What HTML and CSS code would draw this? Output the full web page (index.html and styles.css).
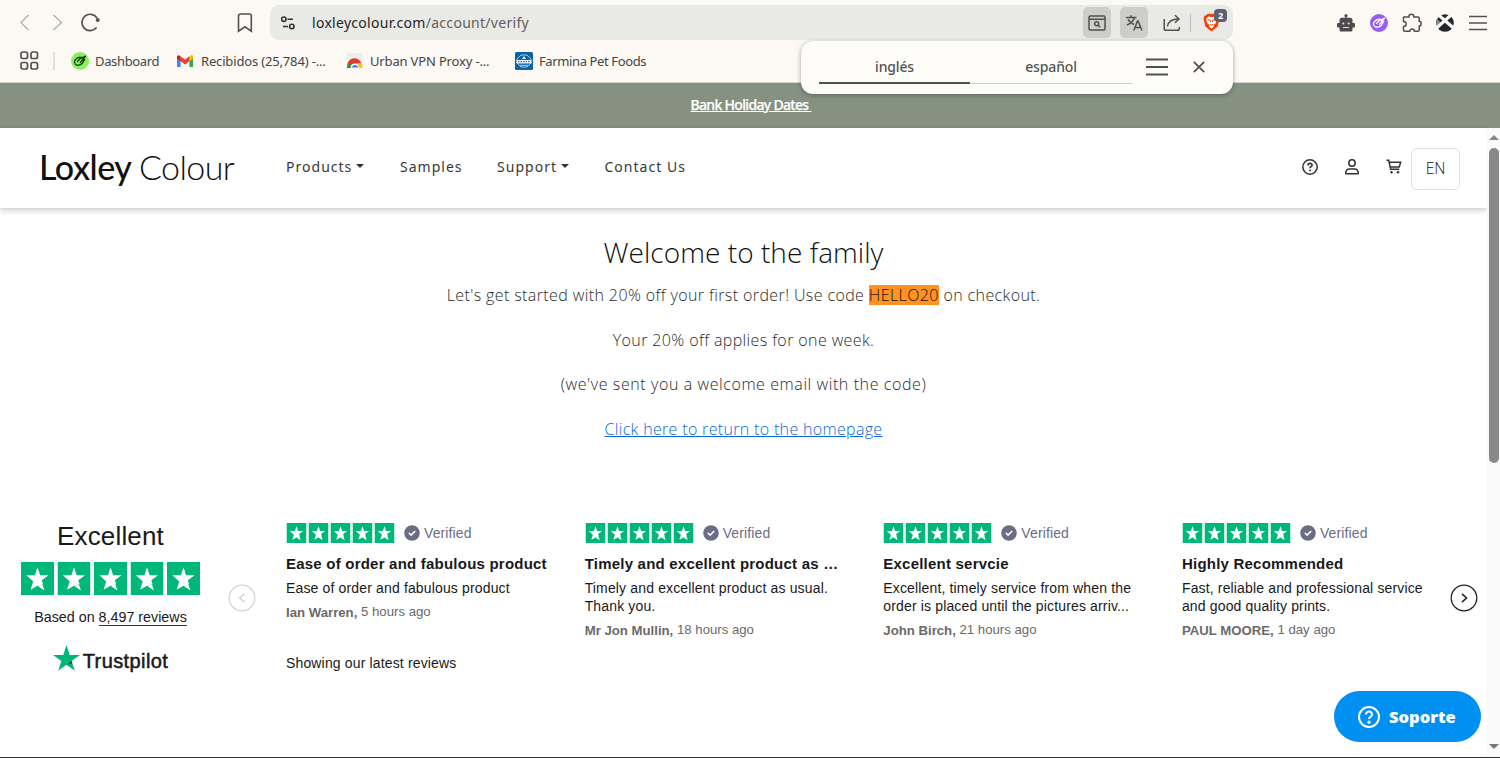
FILE: index.html
```html
<!DOCTYPE html>
<html lang="en">
<head>
<meta charset="utf-8">
<title>Loxley Colour</title>
<link rel="stylesheet" href="styles.css">
</head>
<body>
<svg class="defs" aria-hidden="true">
  <symbol id="star" viewBox="0 0 20 20">
    <rect width="20" height="20" fill="#00b67a"/>
    <path d="M10 3.200l1.600 4.900h5.100l-4.100 3 .8 2.400-3.400.9-4.200 2.400 1.600-5-4.100-3.700h5.100z" fill="#fff"/>
    <path d="M10 14.400l3-.8 1.200 3.600z" fill="#fff"/>
  </symbol>
  <symbol id="stars" viewBox="0 0 108 20">
    <use href="#star" x="0" width="20" height="20"/>
    <use href="#star" x="22" width="20" height="20"/>
    <use href="#star" x="44" width="20" height="20"/>
    <use href="#star" x="66" width="20" height="20"/>
    <use href="#star" x="88" width="20" height="20"/>
  </symbol>
  <symbol id="check" viewBox="0 0 16 16">
    <circle cx="8" cy="8" r="7.800" fill="#6c6c85"/>
    <path d="M4.800 7.800l2.300 2.300 4.100-4.100" fill="none" stroke="#fff" stroke-width="1.600"/>
  </symbol>
  <symbol id="hand" viewBox="0 0 18 18">
    <path d="M4 8.200c2-2.600 4.500-3.400 6.500-2.800l-2.500 2 6.500-3.200-3 3.300 2.200-.2-2.500 4.200c-2 2.100-5.500 2.300-7 .6-.9-1.200-1-2.700-.2-3.900zM6 9.600l2.500-1.800M9 10.800l3-3" fill="none" stroke="currentColor" stroke-width="1.300" stroke-linejoin="round"/>
  </symbol>
</svg>

<header class="browser">
  <div class="toolbar">
    <div class="nav-icons">
      <svg width="12" height="20" viewBox="0 0 12 20" class="stroke faint"><path d="M9.500 2L2 9.500L9.500 17"/></svg>
      <svg width="12" height="20" viewBox="0 0 12 20" class="stroke faint"><path d="M1.500 2L9.500 9.500L1.500 17"/></svg>
      <svg width="20" height="20" viewBox="0 0 20 20" class="stroke reload"><path d="M15.600 14.500A8.200 8.200 0 1 1 16 5"/><circle cx="16.700" cy="7" r="2" fill="#505050" stroke="none"/></svg>
    </div>
    <svg width="16" height="20" viewBox="0 0 16 20" class="stroke bookmark"><path d="M1.500 18.200V3a2 2 0 0 1 2-2h8.800a2 2 0 0 1 2 2v15.200L8 13.800z"/></svg>
    <div class="address">
      <svg width="14" height="14" viewBox="0 0 14 14" class="stroke tune"><circle cx="2.800" cy="3.200" r="2.200"/><path d="M6.500 3.200H12M2 10.500h5"/><circle cx="10.800" cy="10.500" r="2.200"/></svg>
      <span class="url">loxleycolour.com<span class="path">/account/verify</span></span>
      <div class="tools">
        <span class="tool on"><svg width="18" height="16" viewBox="0 0 18 16" class="stroke"><rect x="1" y="1" width="16" height="14" rx="1.200"/><path d="M1 4.200h16M10.200 10.200l2 2"/><circle cx="8.700" cy="8.700" r="2"/></svg></span>
        <span class="tool on"><svg width="18" height="18" viewBox="0 0 18 18" class="stroke"><path d="M1 3.500h10.500M6 1.200v2.300M9.500 3.500C8.500 7 5.500 9.500 2 11M3 5.500c1.500 2.300 3.300 4 6 5M8.800 16.500l3.700-9.500h.6l3.900 9.500M10 13.500h6"/></svg></span>
        <svg width="18" height="18" viewBox="0 0 18 18" class="stroke share"><path d="M1.200 5v9.500a1.800 1.800 0 0 0 1.800 1.800h11.500a1.800 1.800 0 0 0 1.800-1.800V13M4.500 12.500c.5-5 4-7.500 11.500-7.500M12 1.200L16 5l-4 3.800"/></svg>
        <i class="sep"></i>
        <span class="brave">
          <svg width="17" height="19" viewBox="0 0 17 19"><path d="M4.500.8h8l1.500 1.700h1.500l1 3-1.800 8L8.500 18.500 2.300 13.500.5 5.500l1-3H3z" fill="#f5400c"/><path d="M3.200 5.500l2.500-2 2.800.7 2.800-.7 2.500 2-.8 4.500-2.500 2 .2 1.700-2.200 1.800-2.200-1.800.2-1.700L4 10z" fill="#fff"/><path d="M4.800 6.500l2.500.8.3 1.700M12.200 6.500l-2.500.8-.3 1.700M7 11.500l1.500.7 1.500-.7" stroke="#f5400c" fill="none"/></svg>
          <b class="badge">2</b>
        </span>
      </div>
    </div>
    <div class="extensions">
      <svg width="18" height="18" viewBox="0 0 18 18"><path d="M8.300 3.800V3a1.500 1.500 0 1 1 1.400 0v.8H13A2.500 2.500 0 0 1 15.500 6.300V9h1.500a1 1 0 0 1 1 1v2.500a1 1 0 0 1-1 1h-1.500V16a1.500 1.500 0 0 1-1.500 1.500H4A1.500 1.500 0 0 1 2.500 16v-2.500H1a1 1 0 0 1-1-1V10a1 1 0 0 1 1-1h1.500V6.300A2.500 2.500 0 0 1 5 3.800z" fill="#4c4c4c"/><circle cx="6.300" cy="9.500" r="1.100" fill="#ddd"/><circle cx="11.700" cy="9.500" r="1.100" fill="#ddd"/><path d="M6 13.500h6" stroke="#ddd"/></svg>
      <span class="round purple"><svg width="18" height="18"><use href="#hand"/></svg></span>
      <svg width="20" height="20" viewBox="0 0 20 20" class="stroke puzzle"><path d="M2 4h4.800c-.3-3.800 5.400-3.800 5.100 0h4.300a1 1 0 0 1 1 1v3.300c2.600 0 2.600 4.700 0 4.700v3.800a1.500 1.500 0 0 1-1.500 1.500h-3.200c0-3-4.700-3-4.700 0H3a1.500 1.500 0 0 1-1.500-1.500v-3.300c3.600 0 3.600-5 0-5V4.800A.8.8 0 0 1 2 4z"/></svg>
      <svg width="18" height="18" viewBox="0 0 18 18"><circle cx="9" cy="9" r="8.800" fill="#24282e"/><path d="M1 5l3.500 3.500L.5 12z" fill="#8193a8"/><path d="M0 14.500L15 1M1.500 0L18 14.500" stroke="#fcf8f4" stroke-width="3.200"/></svg>
      <svg width="20" height="16" viewBox="0 0 20 16" class="stroke burger"><path d="M1 1.500h18M1 8h18M1 14.500h18"/></svg>
    </div>
  </div>
  <div class="bookmarks">
    <svg width="20" height="20" viewBox="0 0 20 20" class="stroke apps"><rect x="1" y="1" width="6.500" height="6.500" rx="1.800"/><rect x="11" y="1" width="6.500" height="6.500" rx="1.800"/><rect x="1" y="11.500" width="6.500" height="6.500" rx="1.800"/><rect x="11" y="11.500" width="6.500" height="6.500" rx="1.800"/></svg>
    <i class="sep"></i>
    <span class="mark m1"><span class="round green"><svg width="18" height="18"><use href="#hand"/></svg></span><span class="label">Dashboard</span></span>
    <span class="mark m2"><svg width="16" height="12" viewBox="0 0 16 12"><path d="M0 1.500V12h3.600V4.500z" fill="#4285f4"/><path d="M16 1.500V12h-3.600V4.500z" fill="#34a853"/><path d="M12.400 1.300l2-1.200C15.500 0 16 1 16 1.800v1.700l-3.600 2.700z" fill="#fbbc04"/><path d="M3.600 1.300L8 4.600l4.400-3.300v5L8 9.500 3.600 6.300z" fill="#ea4335"/><path d="M0 1.800C0 .5 1.500-.5 3 .8l.6.5v5L0 3.500z" fill="#c5221f"/></svg><span class="label">Recibidos (25,784) -...</span></span>
    <span class="mark m3"><svg width="16" height="16" viewBox="0 0 16 16"><rect width="16" height="10" fill="#eee"/><path d="M.5 14.500A7.200 7.200 0 0 1 14.500 10.500H8a4 4 0 0 0-4 2z" fill="#e33b2e"/><path d="M0 15c0-2 .5-3 1.500-4.300L5 15z" fill="#1a9c4b"/><path d="M11 10.500h3.600c.8 1.500 1 2.500 1 4.500H11z" fill="#fbc116"/><path d="M4.200 15a3.800 3.500 0 0 1 7.600 0z" fill="#3b7de9" stroke="#fff"/></svg><span class="label">Urban VPN Proxy -...</span></span>
    <span class="mark m4"><svg width="18" height="18" viewBox="0 0 18 18"><rect width="18" height="18" rx="1.500" fill="#0c62a3"/><path d="M6 3h6l4 4v4l-4 4H6l-4-4V7z" fill="none" stroke="#a5cbe5"/><path d="M1.500 8h15v3.500h-15zM7 7l2-3 2 3z" fill="#e8f2f9"/><path d="M3 9.700h12" stroke="#0c62a3" stroke-dasharray="1.500 1"/><path d="M5 13.300h8" stroke="#a5cbe5"/></svg><span class="label">Farmina Pet Foods</span></span>
  </div>
  <div class="translate">
    <span class="tab active"><span>inglés</span></span>
    <span class="tab"><span>español</span></span>
    <svg width="22" height="18" viewBox="0 0 22 18" class="stroke menu"><path d="M0 1.500h22M0 9h22M0 16.500h22"/></svg>
    <svg width="12" height="12" viewBox="0 0 12 12" class="stroke close"><path d="M.8.800l10.400 10.400M11.200.800L.8 11.200"/></svg>
  </div>
</header>

<div class="banner"><a>Bank Holiday Dates&nbsp;</a></div>

<div class="viewport">
  <main class="page">
    <nav class="site-nav">
      <div class="logo"><span class="lox">Loxley</span><span class="col">Colour</span></div>
      <div class="links">
        <a class="l1">Products<i class="caret"></i></a>
        <a class="l2">Samples</a>
        <a class="l3">Support<i class="caret"></i></a>
        <a class="l4">Contact Us</a>
      </div>
      <div class="actions">
        <svg width="16" height="16" viewBox="0 0 16 16" class="stroke dark"><circle cx="8" cy="8" r="7.200"/><path d="M6 6.500c0-2.800 4.200-2.700 4.100-.3C10 7.700 8 7.600 8 9.300" stroke-width="1.700"/><circle cx="8" cy="11.500" r="1" fill="#333" stroke="none"/></svg>
        <svg width="14" height="16" viewBox="0 0 14 16" class="stroke dark"><circle cx="7" cy="4" r="3.200"/><path d="M.8 14.800v-1.300a3.500 3.500 0 0 1 3.500-3.500h5.400a3.500 3.500 0 0 1 3.500 3.500v1.300z" stroke-linejoin="round"/></svg>
        <svg width="16" height="16" viewBox="0 0 16 16" class="stroke dark cart"><path d="M.5 1.300h2.200l2 9h8.500M3 3.300h11.700l-1.500 4.800H4.200"/><circle cx="5.500" cy="13.200" r="1.200" fill="#333" stroke="none"/><circle cx="12" cy="13.200" r="1.200" fill="#333" stroke="none"/></svg>
        <span class="lang"><span>EN</span></span>
      </div>
    </nav>

    <section class="welcome">
      <h1>Welcome to the family</h1>
      <p class="p1">Let's get started with 20% off your first order! Use code <mark>HELLO20</mark> on checkout.</p>
      <p class="p2">Your 20% off applies for one week.</p>
      <p class="p3">(we've sent you a welcome email with the code)</p>
      <p class="p4"><a>Click here to return to the homepage</a></p>
    </section>

    <section class="trust">
      <div class="summary">
        <div class="rating">Excellent</div>
        <svg class="big-stars" width="179" height="33" viewBox="0 0 179 33"><use href="#star" x="0" width="33" height="33"/><use href="#star" x="36.500" width="33" height="33"/><use href="#star" x="73" width="33" height="33"/><use href="#star" x="109.500" width="33" height="33"/><use href="#star" x="146" width="33" height="33"/></svg>
        <div class="based">Based on <u>8,497 reviews</u></div>
        <div class="brand"><svg width="27" height="26" viewBox="0 0 27 26"><path d="M13.500 0l3.200 9.900H27l-8.400 6.100 3.200 9.800-8.300-6-8.300 6 3.200-9.800L0 9.900h10.300z" fill="#00b67a"/><path d="M19.300 18.200l-.7-2.200-5.100 3.800z" fill="#005128"/></svg><span>Trustpilot</span></div>
      </div>
      <svg class="arrow prev" width="28" height="28" viewBox="0 0 28 28"><circle cx="14" cy="14" r="12.800"/><path d="M16.500 9.800L11.700 14l4.800 4.200"/></svg>
      <div class="reviews">
        <div class="grid">
          <article>
            <div class="head"><svg width="109" height="20" preserveAspectRatio="none"><use href="#stars"/></svg><svg class="tick" width="16" height="16"><use href="#check"/></svg><span>Verified</span></div>
            <h2>Ease of order and fabulous product</h2>
            <div class="text">Ease of order and fabulous product</div>
            <div class="by"><b>Ian Warren,</b> <span>5 hours ago</span></div>
          </article>
          <article>
            <div class="head"><svg width="109" height="20"><use href="#stars"/></svg><svg class="tick" width="16" height="16"><use href="#check"/></svg><span>Verified</span></div>
            <h2>Timely and excellent product as …</h2>
            <div class="text">Timely and excellent product as usual.<br>Thank you.</div>
            <div class="by"><b>Mr Jon Mullin,</b> <span>18 hours ago</span></div>
          </article>
          <article>
            <div class="head"><svg width="109" height="20"><use href="#stars"/></svg><svg class="tick" width="16" height="16"><use href="#check"/></svg><span>Verified</span></div>
            <h2>Excellent servcie</h2>
            <div class="text">Excellent, timely service from when the<br>order is placed until the pictures arriv...</div>
            <div class="by"><b>John Birch,</b> <span>21 hours ago</span></div>
          </article>
          <article>
            <div class="head"><svg width="109" height="20"><use href="#stars"/></svg><svg class="tick" width="16" height="16"><use href="#check"/></svg><span>Verified</span></div>
            <h2>Highly Recommended</h2>
            <div class="text">Fast, reliable and professional service<br>and good quality prints.</div>
            <div class="by"><b>PAUL MOORE,</b> <span>1 day ago</span></div>
          </article>
        </div>
        <div class="showing">Showing our latest reviews</div>
      </div>
      <svg class="arrow next" width="28" height="28" viewBox="0 0 28 28"><circle cx="14" cy="14" r="12.800"/><path d="M12 9.800l4.500 4.200-4.500 4.200"/></svg>
    </section>
  </main>
  <aside class="scrollbar"><i class="up"></i><i class="thumb"></i><i class="down"></i></aside>
  <div class="support"><svg width="24" height="24" viewBox="0 0 24 24"><circle cx="12" cy="12" r="10"/><path d="M9 9.500c0-4 6.200-3.800 6 0-.1 2.200-3 2.200-3 4.500"/><circle cx="12" cy="17.200" r=".7"/></svg><span>Soporte</span></div>
</div>
</body>
</html>
```
FILE: styles.css
```css
* { box-sizing: border-box; }
body { margin: 0; width: 1500px; height: 758px; overflow: hidden; background: #fff; font-family: "Liberation Sans", Arial, sans-serif; display: flex; flex-direction: column; }
svg { display: block; flex: none; }
.defs { position: absolute; width: 0; height: 0; }
.stroke { fill: none; stroke: #505050; stroke-width: 1.5; }
.stroke.faint { stroke: #b5b3b0; }
.stroke.dark { stroke: #333; }

.browser { position: relative; z-index: 2; height: 83px; flex: none; background: #fcf8f4; border-bottom: 1px solid #d5d3cc; font-family: "Noto Sans", "Open Sans", sans-serif; }
.toolbar { height: 45px; display: flex; align-items: center; padding-left: 19px; }
.nav-icons { display: flex; align-items: center; gap: 21px; width: 218px; }
.reload { margin-left: -4px; stroke-width: 1.7; }
.bookmark { stroke-width: 1.6; }
.address { margin-left: 17px; width: 963px; height: 35px; border-radius: 9px; background: #e9eae5; display: flex; align-items: center; padding-left: 11px; }
.stroke.tune { stroke: #333; stroke-width: 1.6; }
.url { margin-left: 17px; font-size: 14px; color: #252525; letter-spacing: .29px; white-space: nowrap; flex: 1; }
.path { color: #5f605d; }
.tools { display: flex; align-items: center; height: 35px; padding-right: 8px; }
.tool { width: 28px; height: 31px; border-radius: 5px; display: flex; align-items: center; justify-content: center; margin-right: 9px; }
.on { background: #cdcec9; }
.share { margin-left: 6px; }
.tools .sep { width: 1px; height: 18px; background: #bfc0bb; margin: 0 12px 0 9px; }
.brave { position: relative; width: 22px; }
.badge { position: absolute; left: 11px; top: -4px; width: 13px; height: 13px; border-radius: 4px; background: #5c5f72; color: #fff; font: bold 9px/13px "Noto Sans", sans-serif; text-align: center; }
.extensions { margin-left: 104px; display: flex; align-items: center; gap: 15px; }
.puzzle { margin: 0 -1px; }
.burger { margin-left: -1px; }
.round { width: 18px; height: 18px; border-radius: 50%; display: block; flex: none; }
.purple { background: #9a5cf5; color: #fff; }
.green { background: #84f35b; color: #15350f; }

.bookmarks { display: flex; align-items: center; height: 32px; padding-left: 20px; color: #444; font-size: 13px; }
.apps { stroke-width: 1.7; }
.bookmarks .sep { width: 2px; height: 18px; background: #e3e0db; margin: 0 16px 0 13px; }
.mark { display: flex; align-items: center; white-space: nowrap; }
.label { margin-top: -1px; }
.m1 { width: 106px; gap: 6px; letter-spacing: -.35px; }
.m2 { width: 170px; gap: 8px; letter-spacing: -.16px; }
.m3 { width: 168px; gap: 7px; letter-spacing: -.16px; }
.m4 { gap: 6px; letter-spacing: -.38px; }

.translate { position: absolute; left: 801px; top: 41px; width: 432px; height: 53px; border-radius: 12px; background: #fefcf9; box-shadow: 0 1px 4px rgba(40,45,40,.45); display: flex; align-items: center; padding: 0 28px 2px 18px; font-size: 14px; font-weight: 500; color: #505752; }
.tab { width: 151px; height: 33px; display: flex; align-items: center; justify-content: center; border-bottom: 1px solid #ccd2cd; margin-top: 1px; letter-spacing: -.15px; }
.tab + .tab { width: 162px; }
.tab.active { border-bottom: 2px solid #4b574d; }
.menu { margin-left: 14px; stroke-width: 2; }
.close { margin-left: 25px; stroke-width: 1.7; }

.banner { height: 45px; flex: none; background: #869182; text-align: center; padding: 12px 0 0 2px; font: 500 14px/20px "Noto Sans", sans-serif; color: #fff; letter-spacing: -.68px; -webkit-text-stroke: .25px #fff; }
.banner a { text-decoration: underline; }

.viewport { position: relative; flex: 1; display: flex; border-bottom: 1px solid #333; }
.page { width: 1487px; }
.site-nav { height: 80px; padding-left: 40px; display: flex; box-shadow: 0 2px 6px rgba(0,0,0,.22); font-family: "Noto Sans", sans-serif; }
.logo { width: 246px; display: flex; align-items: baseline; font-family: Lato, sans-serif; font-size: 34px; line-height: 40px; padding-top: 19px; color: #111; white-space: nowrap; }
.lox { width: 100px; margin-left: -1px; font-weight: 500; letter-spacing: -.5px; }
.col { font-weight: 300; letter-spacing: -.6px; }
.links { display: flex; padding-top: 28px; font-size: 14px; line-height: 22px; letter-spacing: 1.02px; color: #383838; width: 1016px; white-space: nowrap; }
.l1 { width: 114px; }
.l2 { width: 97px; }
.l3 { width: 107.5px; }
.caret { display: inline-block; border: 4.5px solid transparent; border-top-color: #333; border-bottom: 0; margin-left: 4px; vertical-align: 4px; }
.actions { display: flex; padding-top: 31px; }
.actions .dark { margin-right: 27px; }
.actions .dark:first-child { margin-right: 27px; }
.actions .cart { margin-right: 9px; }
.lang { margin-top: -11px; width: 49px; height: 42px; border: 1px solid #dedede; border-radius: 6px; font-family: "Open Sans", sans-serif; font-weight: 300; font-size: 15.500px; color: #111; display: flex; align-items: center; justify-content: center; padding-bottom: 2px; }

.welcome { height: 305px; text-align: center; font-family: "Open Sans", sans-serif; font-weight: 300; color: #2a2a2a; padding-top: 24px; white-space: nowrap; }
.welcome h1 { margin: 0 0 11px; font-weight: 300; font-size: 28px; line-height: 40px; color: #111; letter-spacing: .05px; }
.welcome p { margin: 0 0 20.500px; font-size: 16px; line-height: 24px; }
.p1 { letter-spacing: .395px; }
.p2 { letter-spacing: .39px; }
.p3 { letter-spacing: .59px; }
.p4 { letter-spacing: .33px; }
.welcome mark { background: #ff9220; color: #111; display: inline-block; line-height: 20px; }
.welcome a { color: #0b68d8; text-decoration: underline; }

.trust { display: flex; color: #191919; }
.summary { width: 221px; display: flex; flex-direction: column; align-items: center; padding-top: 7px; }
.rating { font-size: 26px; line-height: 32px; letter-spacing: .15px; }
.big-stars { margin-top: 10px; }
.based { margin-top: 12px; font-size: 14.300px; line-height: 20px; white-space: nowrap; }
.based u { text-decoration: none; border-bottom: 1px solid #333; }
.brand { margin-top: 18px; display: flex; gap: 3px; font-size: 20px; line-height: 30px; letter-spacing: .4px; -webkit-text-stroke: .5px #191919; }
.brand span { padding-top: 1px; }
.arrow { fill: none; stroke: #222; stroke-width: 1.3; margin-top: 71px; }
.arrow path { stroke-width: 1.6; }
.prev { margin-left: 7px; stroke: #d5d5d5; }
.next { margin-left: -1px; }
.reviews { margin-left: 30px; width: 1165px; padding-top: 10px; flex: none; }
.grid { display: grid; grid-template-columns: repeat(4, 1fr); column-gap: 29.600px; height: 122px; }
article { white-space: nowrap; min-width: 0; }
.head { display: flex; align-items: center; color: #6c6c85; font-size: 14px; height: 20px; letter-spacing: .12px; }
.head span { margin-left: 4px; }
.tick { margin-left: 9px; }
h2 { margin: 11px 0 0; font-size: 15px; line-height: 20px; letter-spacing: .22px; }
.text { margin-top: 5px; font-size: 14px; line-height: 18px; letter-spacing: .15px; }
.by { margin-top: 7px; font-size: 13.200px; line-height: 18px; color: #6a6a6a; }
.by span { position: relative; top: -1px; }
.showing { margin-top: 9px; font-size: 14px; line-height: 18px; letter-spacing: .15px; }

.scrollbar { width: 13px; background: #fafafa; display: flex; flex-direction: column; align-items: center; padding: 7px 0 8px 1px; }
.up { border: 5px solid transparent; border-bottom-color: #858585; border-top: 0; }
.thumb { width: 10px; height: 315px; margin-top: 8px; border-radius: 5px; background: #898989; }
.down { margin-top: auto; border: 5px solid transparent; border-top-color: #777; border-bottom: 0; }
.support { position: absolute; right: 19px; bottom: 15px; width: 147px; height: 51px; border-radius: 26px; background: #0090f2; color: #fff; display: flex; align-items: center; padding-left: 23px; gap: 8px; font: 800 16.500px "Open Sans", sans-serif; }
.support svg { fill: none; stroke: #fff; stroke-width: 2; }
```
